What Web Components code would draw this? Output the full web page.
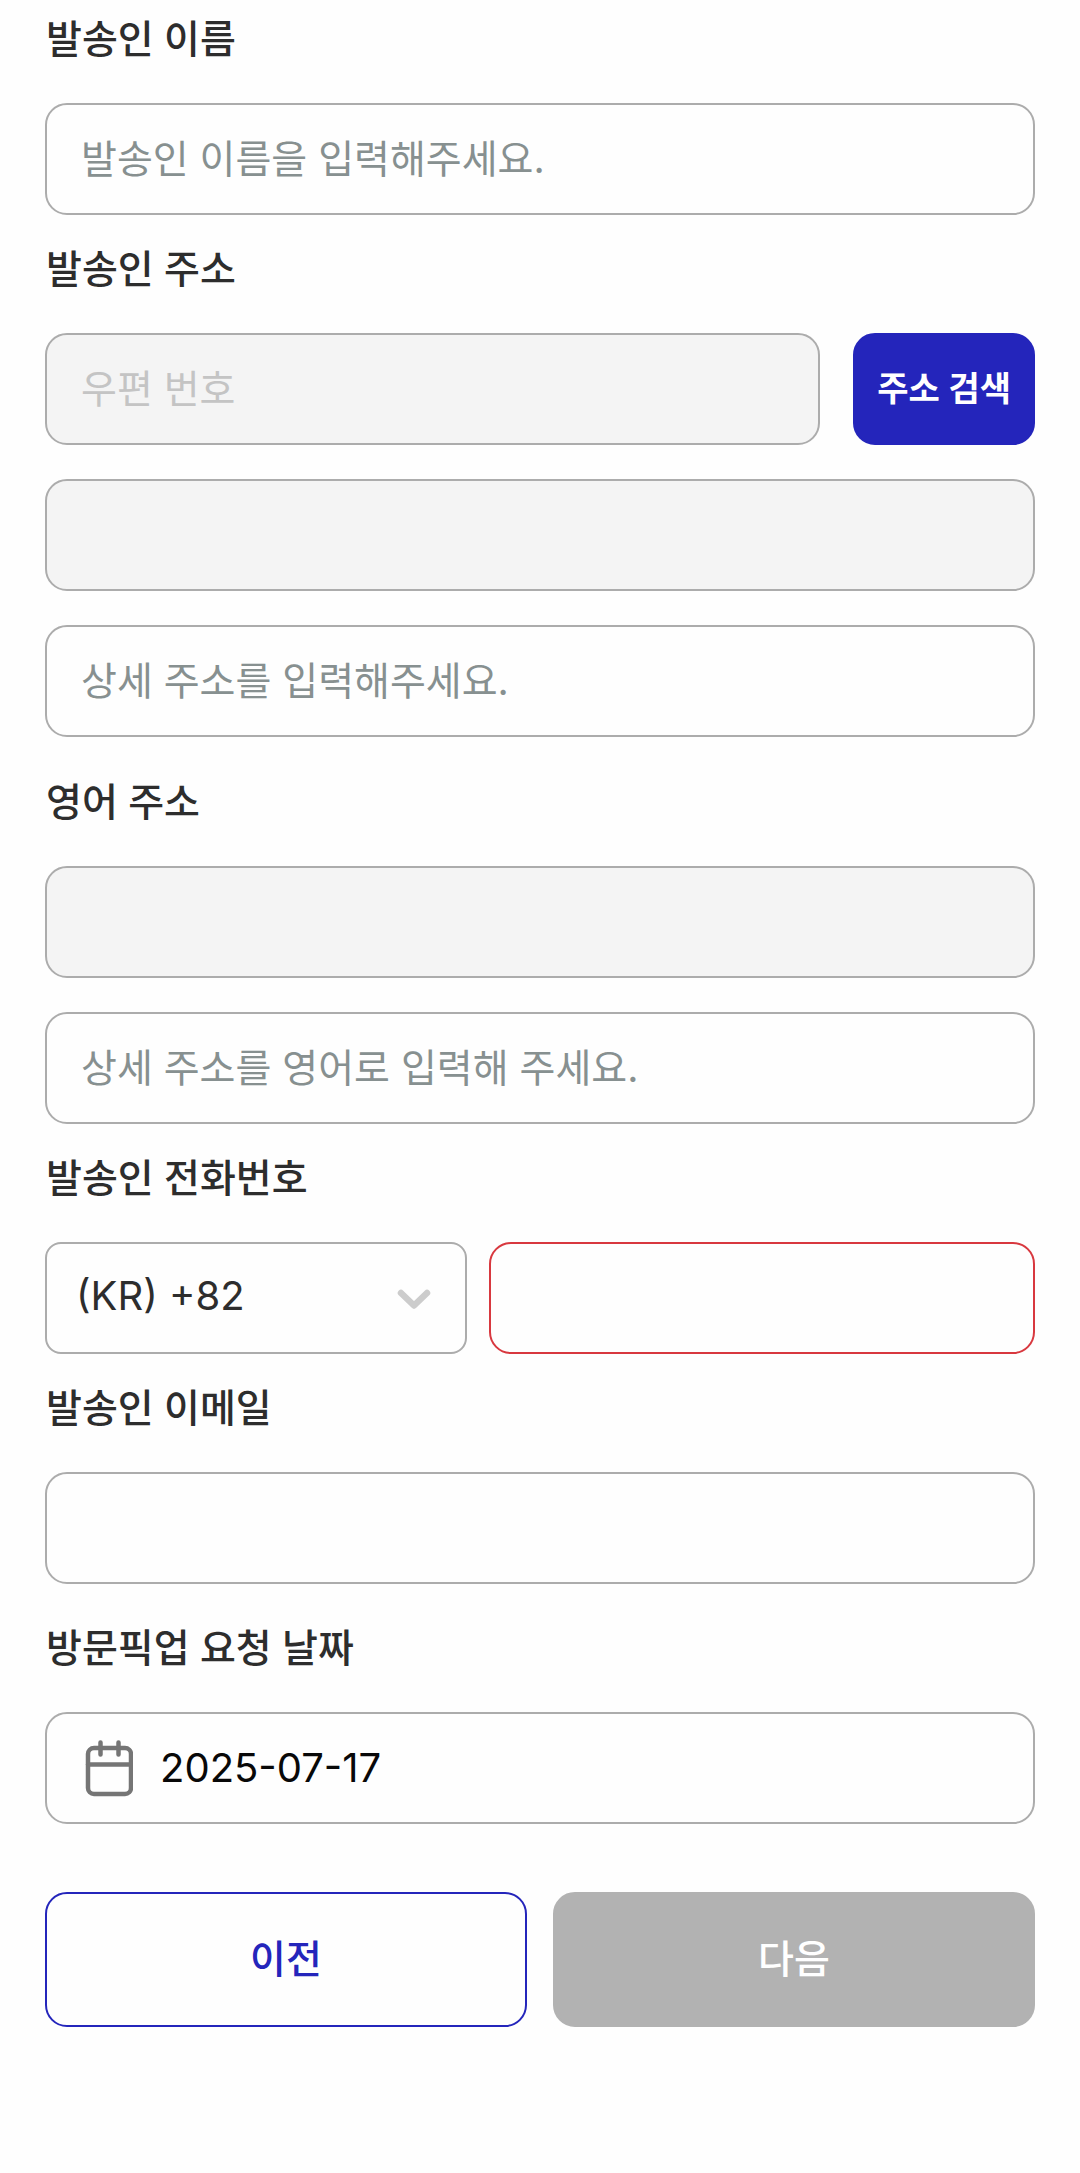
<!DOCTYPE html>
<html lang="ko">
<head>
<meta charset="utf-8">
<meta name="viewport" content="width=device-width, initial-scale=1">
<title>발송인 정보</title>
<style>
  body {
    margin: 0;
    background: #fefefe;
    color: #2d2d2d;
    font-family: Inter, "Noto Sans CJK KR", sans-serif;
    --line: #acacac;
    --brand: #2425bb;
    --muted: #b2b2b2;
    --error: #d8383f;
  }
</style>
</head>
<body>
<sender-form></sender-form>

<script>
  const controlStyles = `
    * { box-sizing: border-box; }
    label {
      display: block;
      width: fit-content;
      margin: 0 0 36px 1px;
      font-size: 39px;
      font-weight: 500;
      line-height: 56px;
    }
    .row { display: flex; }
    .box {
      display: flex;
      align-items: center;
      flex: 1;
      min-width: 0;
      height: 112px;
      border: 2px solid var(--line);
      border-radius: 22px;
      background: #fefefe;
      overflow: hidden;
    }
    input {
      flex: 1;
      min-width: 0;
      width: 100%;
      height: 100%;
      margin: 0;
      padding: 0 34px 2px;
      border: 0;
      outline: 0;
      background: transparent;
      color: #080808;
      font: 400 39px/56px Inter, "Noto Sans CJK KR", sans-serif;
    }
    input::placeholder { color: #879090; opacity: 1; }
  `;

  class FormField extends HTMLElement {
    connectedCallback() {
      if (this.shadowRoot) return;
      const root = this.attachShadow({ mode: 'open', delegatesFocus: true });
      root.innerHTML = `
        <style>
          ${controlStyles}
          :host { display: block; }
          .row { gap: 33px; }
          :host([disabled]) .box { background: #f4f4f4; }
          :host([disabled]) input::placeholder { color: #c4c4c4; }
          :host([with-icon]) .box { padding-left: 38px; }
          :host([with-icon]) input { padding-left: 27px; font-size: 40px; }
          ::slotted(svg) { display: block; flex: none; width: 48px; height: 58px; }
        </style>
        <div class="row">
          <div class="box"><slot name="icon"></slot><input id="control"></div>
          <slot name="action"></slot>
        </div>`;
      const input = root.querySelector('input');
      input.type = this.getAttribute('type') || 'text';
      input.placeholder = this.getAttribute('placeholder') || '';
      input.value = this.getAttribute('value') || '';
      input.disabled = this.hasAttribute('disabled');
      if (this.hasAttribute('label')) {
        const label = document.createElement('label');
        label.htmlFor = 'control';
        label.textContent = this.getAttribute('label');
        root.querySelector('.row').before(label);
      } else {
        input.setAttribute('aria-label', this.getAttribute('name') || '');
      }
    }
  }

  class PhoneField extends HTMLElement {
    connectedCallback() {
      if (this.shadowRoot) return;
      this.attachShadow({ mode: 'open', delegatesFocus: true }).innerHTML = `
        <style>
          ${controlStyles}
          :host { display: block; }
          .row { display: grid; grid-template-columns: 422fr 546fr; gap: 22px; }
          .box.error { border-color: var(--error); }
          .picker { display: grid; align-items: center; }
          .picker > * { grid-area: 1 / 1; }
          select {
            appearance: none;
            width: 100%;
            height: 112px;
            margin: 0;
            padding: 0 80px 4px 29px;
            border: 2px solid var(--line);
            border-radius: 16px;
            background: #fefefe;
            color: #2d2d2d;
            font: 400 40px/56px Inter, "Noto Sans CJK KR", sans-serif;
          }
          svg { justify-self: end; width: 34px; height: 22px; margin-right: 36px; pointer-events: none; }
        </style>
        <label for="phone">발송인 전화번호</label>
        <div class="row">
          <div class="picker">
            <select aria-label="국가 번호"><option>(KR) +82</option></select>
            <svg viewBox="0 0 34 22" fill="none" stroke="#ccc" stroke-width="6.500" stroke-linecap="round" stroke-linejoin="round" aria-hidden="true"><path d="M4 6l13 12.500L30 6"/></svg>
          </div>
          <div class="box error"><input id="phone" type="tel" aria-invalid="true"></div>
        </div>`;
    }
  }

  class FormButton extends HTMLElement {
    connectedCallback() {
      if (this.shadowRoot) return;
      this.attachShadow({ mode: 'open', delegatesFocus: true }).innerHTML = `
        <style>
          :host { display: block; flex: 1; }
          button {
            box-sizing: border-box;
            width: 100%;
            height: 135px;
            margin: 0;
            padding: 0 0 2px;
            border: 2px solid var(--brand);
            border-radius: 22px;
            background: #fefefe;
            color: var(--brand);
            font: 500 39px/56px Inter, "Noto Sans CJK KR", sans-serif;
          }
          :host([kind="next"]) button { border-color: var(--muted); background: var(--muted); color: #fff; }
          :host([kind="search"]) { flex: none; }
          :host([kind="search"]) button {
            height: 112px;
            padding: 0 22px;
            background: var(--brand);
            color: #fff;
            font-size: 34px;
            font-weight: 600;
          }
        </style>
        <button type="button"><slot></slot></button>`;
      this.shadowRoot.querySelector('button').disabled = this.hasAttribute('disabled');
    }
  }

  class SenderForm extends HTMLElement {
    connectedCallback() {
      if (this.shadowRoot) return;
      this.attachShadow({ mode: 'open' }).innerHTML = `
        <style>
          :host { display: block; padding: 11px 45px 146px; }
          form { display: flex; flex-direction: column; gap: 26px; }
          .address { display: flex; flex-direction: column; gap: 34px; }
          .address.spaced { margin-top: 11px; }
          .spaced { margin-top: 10px; }
          .actions { display: flex; gap: 26px; margin-top: 42px; }
        </style>
        <form>
          <form-field label="발송인 이름" placeholder="발송인 이름을 입력해주세요."></form-field>
          <div class="address">
            <form-field label="발송인 주소" placeholder="우편 번호" disabled>
              <form-button slot="action" kind="search">주소 검색</form-button>
            </form-field>
            <form-field name="주소" disabled></form-field>
            <form-field name="상세 주소" placeholder="상세 주소를 입력해주세요."></form-field>
          </div>
          <div class="address spaced">
            <form-field label="영어 주소" disabled></form-field>
            <form-field name="영어 상세 주소" placeholder="상세 주소를 영어로 입력해 주세요."></form-field>
          </div>
          <phone-field></phone-field>
          <form-field label="발송인 이메일" type="email"></form-field>
          <form-field class="spaced" label="방문픽업 요청 날짜" value="2025-07-17" with-icon>
            <svg slot="icon" viewBox="0 0 48 58" fill="none" stroke="#757575" stroke-width="4.500" stroke-linecap="round" aria-hidden="true">
              <rect x="3" y="9" width="43" height="46" rx="6"/>
              <path d="M3 25.500H46M15.500 3.500v12M33.500 3.500v12"/>
            </svg>
          </form-field>
          <div class="actions">
            <form-button>이전</form-button>
            <form-button kind="next" disabled>다음</form-button>
          </div>
        </form>`;
    }
  }

  customElements.define('form-field', FormField);
  customElements.define('phone-field', PhoneField);
  customElements.define('form-button', FormButton);
  customElements.define('sender-form', SenderForm);
</script>
</body>
</html>
